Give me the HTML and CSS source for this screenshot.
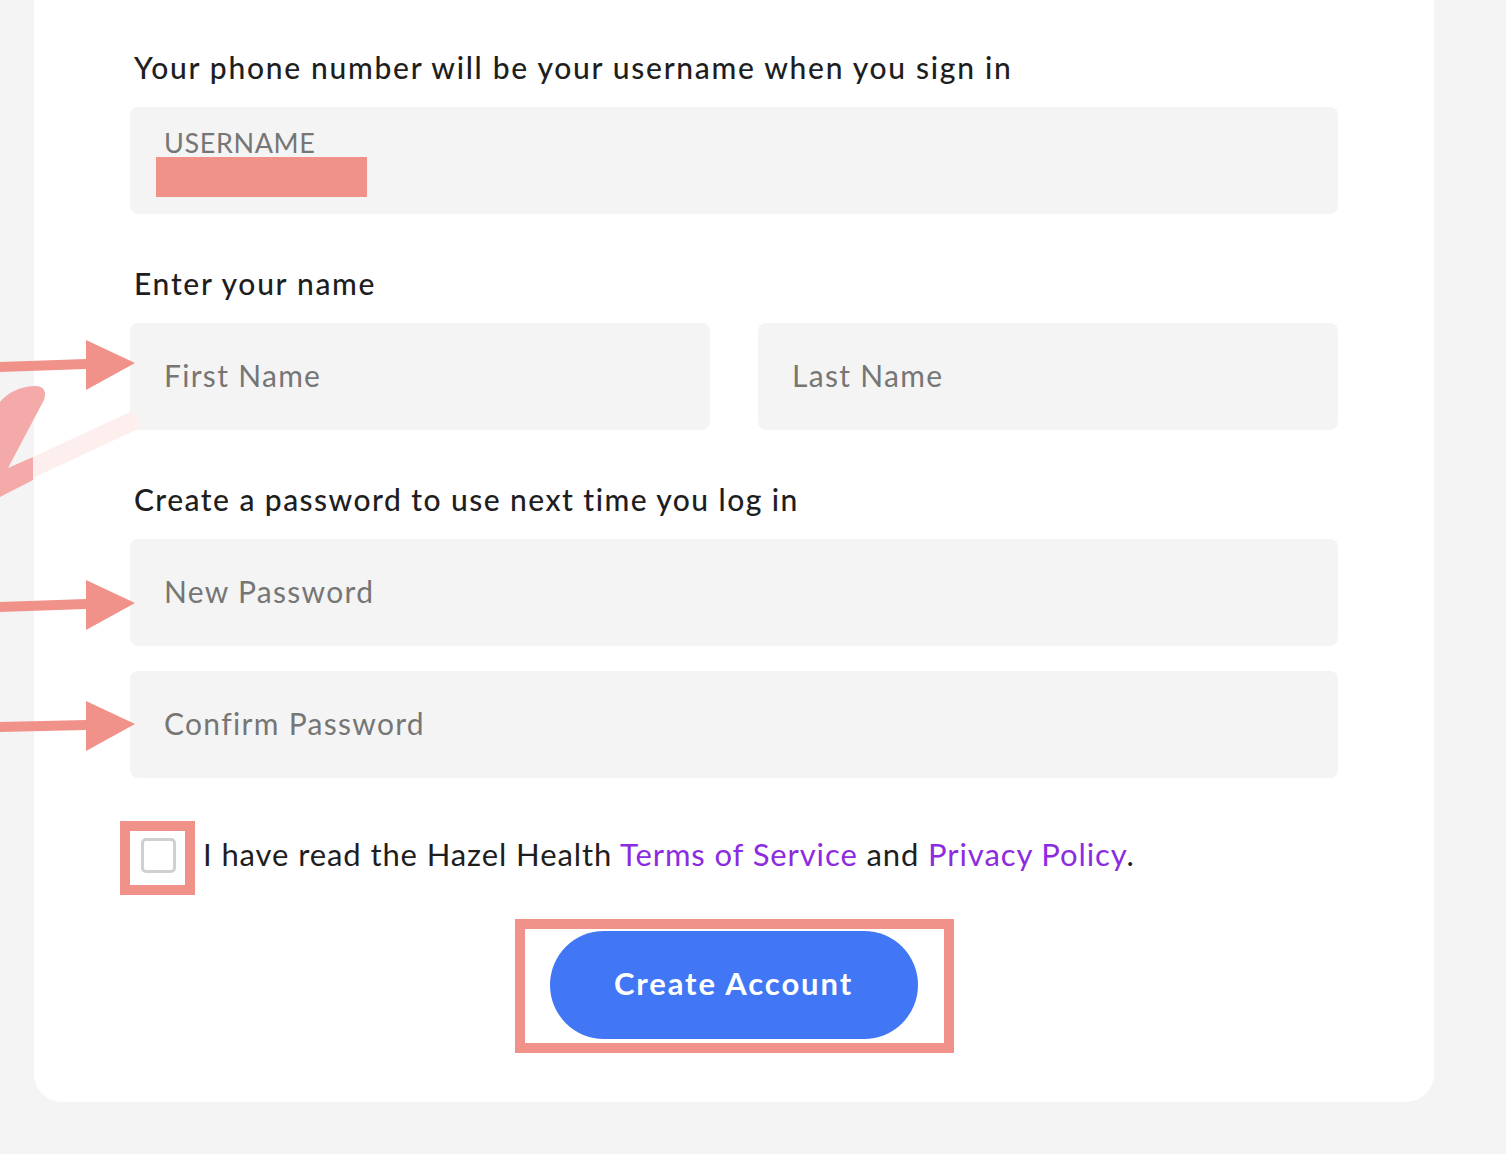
FILE: index.html
```html
<!DOCTYPE html>
<html lang="en">
<head>
<meta charset="utf-8">
<title>Create Account</title>
<link rel="stylesheet" href="styles.css">
</head>
<body>
<main class="card">
  <form class="form">
    <p class="label">Your phone number will be your username when you sign in</p>
    <div class="field field-username">
      <span class="field-caption">USERNAME</span>
      <span class="redaction"></span>
    </div>

    <p class="label label-name">Enter your name</p>
    <div class="row-two">
      <input class="field input" type="text" placeholder="First Name">
      <input class="field input" type="text" placeholder="Last Name">
    </div>

    <p class="label label-pass">Create a password to use next time you log in</p>
    <div class="stack">
      <input class="field input" type="password" placeholder="New Password">
      <input class="field input" type="password" placeholder="Confirm Password">
    </div>

    <div class="terms">
      <span class="mark-box"><span class="checkbox"></span></span>
      <span class="terms-text">I have read the Hazel Health <a class="link" href="#">Terms of Service</a> and <a class="link" href="#">Privacy Policy</a>.</span>
    </div>

    <div class="actions">
      <span class="mark-box mark-button"><button class="btn" type="button">Create Account</button></span>
    </div>
  </form>
</main>

<svg class="annotations" width="200" height="800" viewBox="0 0 200 800" aria-hidden="true">
  <polygon points="0,362 86,359 86,369 0,372" fill="#f0928a"/>
  <polygon points="86,340 135,363 86,390" fill="#f0928a"/>
  <polygon points="0,602 86,599 86,609 0,612" fill="#f0928a"/>
  <polygon points="86,580 135,603 86,630" fill="#f0928a"/>
  <polygon points="0,722 86,720 86,730 0,732" fill="#f0928a"/>
  <polygon points="86,701 135,724 86,751" fill="#f0928a"/>
  <path d="M33,457 L130,412 Q138,412 140,428 L33,478 Z" fill="#fdefed"/>
  <path d="M0,402 C8,392 20,387 34,386 C44,385 47,392 44,400 L8,468 L33,457 L33,480 L0,497 Z" fill="#f4aaa8"/>
</svg>
</body>
</html>
```

FILE: styles.css
```css
* { box-sizing: border-box; }

html, body {
  margin: 0;
  padding: 0;
  background: #f4f4f4;
}

body {
  min-height: 1154px;
  font-family: "Lato", "Open Sans", sans-serif;
  color: #1e1e1e;
  position: relative;
}

.card {
  width: 1400px;
  margin-left: 34px;
  background: #ffffff;
  border-radius: 0 0 28px 28px;
  padding: 49px 96px 49px;
}

.form {
  display: flex;
  flex-direction: column;
}

.label {
  margin: 0 0 22px 4px;
  font-size: 30px;
  line-height: 36px;
  font-weight: 500;
  letter-spacing: 1.7px;
  color: #1e1e1e;
}

.label-pass {
  letter-spacing: 1.45px;
}

.field {
  display: block;
  width: 100%;
  height: 107px;
  background: #f4f4f4;
  border: none;
  border-radius: 8px;
}

.field + .label,
.row-two + .label,
.stack + .label {
  margin-top: 51px;
}

.field-username {
  display: flex;
  flex-direction: column;
  align-items: flex-start;
  padding: 19px 0 0 34px;
}

.field-caption {
  font-size: 27px;
  line-height: 34px;
  color: #767676;
  letter-spacing: 0.6px;
}

.redaction {
  display: block;
  width: 211px;
  height: 40px;
  margin: -3px 0 0 -8px;
  background: #f0928a;
}

.input {
  padding: 0 0 3px 34px;
  font-family: inherit;
  font-size: 30px;
  letter-spacing: 1.3px;
  color: #1e1e1e;
  outline: none;
}

.input::placeholder {
  color: #767676;
  opacity: 1;
}

.row-two {
  display: flex;
  gap: 48px;
}

.row-two .field {
  flex: 1;
}

.stack {
  display: flex;
  flex-direction: column;
  gap: 25px;
}

.terms {
  display: flex;
  align-items: center;
  margin: 43px 0 0 -10px;
}

.mark-box {
  display: inline-flex;
  border: 10px solid #f0928a;
  padding: 7px 9px 12px 11px;
}

.checkbox {
  display: block;
  width: 35px;
  height: 35px;
  border: 3px solid #d0d0d0;
  border-radius: 5px;
  background: #fff;
}

.terms-text {
  margin: -9px 0 0 8px;
  font-size: 31px;
  line-height: 38px;
  letter-spacing: 0.9px;
  color: #1e1e1e;
}

.link {
  color: #8c2be0;
  text-decoration: none;
}

.actions {
  display: flex;
  justify-content: center;
  margin-top: 24px;
}

.mark-button {
  padding: 2px 26px 4px 25px;
}

.btn {
  width: 368px;
  height: 108px;
  padding: 0 0 4px;
  border: none;
  border-radius: 54px;
  background: #4176f5;
  color: #ffffff;
  font-family: inherit;
  font-size: 31px;
  font-weight: 700;
  letter-spacing: 1.9px;
  cursor: pointer;
}

.annotations {
  position: absolute;
  left: 0;
  top: 0;
  pointer-events: none;
}
```
